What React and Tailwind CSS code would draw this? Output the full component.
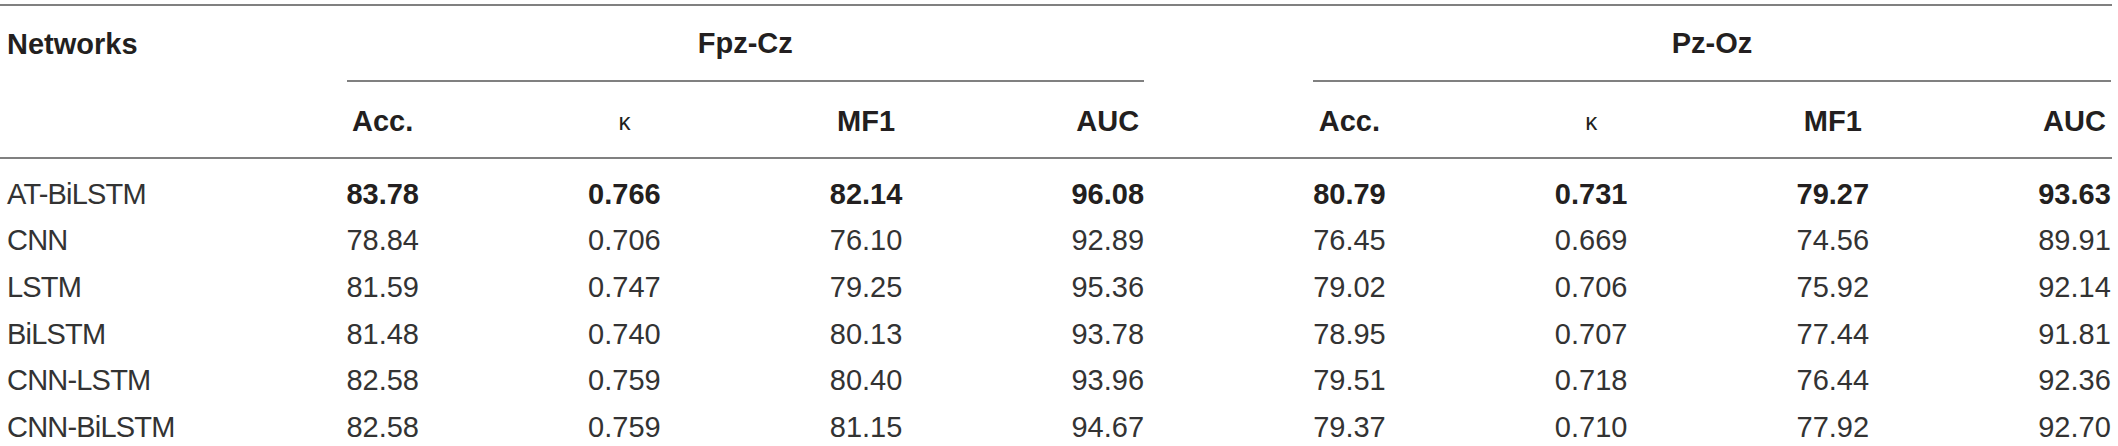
import React from "react";

const grid = "grid grid-cols-[177px_repeat(8,72px)] gap-x-[169.7px]";

const metrics = ["Acc.", "κ", "MF1", "AUC"];

const rows = [
  { name: "AT-BiLSTM", best: true, vals: ["83.78", "0.766", "82.14", "96.08", "80.79", "0.731", "79.27", "93.63"] },
  { name: "CNN", vals: ["78.84", "0.706", "76.10", "92.89", "76.45", "0.669", "74.56", "89.91"] },
  { name: "LSTM", vals: ["81.59", "0.747", "79.25", "95.36", "79.02", "0.706", "75.92", "92.14"] },
  { name: "BiLSTM", vals: ["81.48", "0.740", "80.13", "93.78", "78.95", "0.707", "77.44", "91.81"] },
  { name: "CNN-LSTM", vals: ["82.58", "0.759", "80.40", "93.96", "79.51", "0.718", "76.44", "92.36"] },
  { name: "CNN-BiLSTM", vals: ["82.58", "0.759", "81.15", "94.67", "79.37", "0.710", "77.92", "92.70"] },
];

function Cell({ children, className = "" }) {
  return <div className={`flex items-center justify-center whitespace-nowrap ${className}`}>{children}</div>;
}

export default function App() {
  return (
    <div className="w-[2118px] h-[446px] overflow-hidden bg-white font-['Liberation_Sans',Arial,sans-serif] text-[29px] leading-none text-[#231f20]">
      <div className="w-[2112px] pt-[4px]">
        <div className="h-[2px] bg-[#808080]" />

        {/* group header */}
        <div className={`${grid} h-[76px]`}>
          <div className="flex items-center pl-[7px] font-bold">Networks</div>
          <Cell className="col-span-4 font-bold border-b-2 border-[#808080]">Fpz-Cz</Cell>
          <Cell className="col-span-4 font-bold border-b-2 border-[#808080]">Pz-Oz</Cell>
        </div>

        {/* metric header */}
        <div className={`${grid} h-[75px] pt-[4px]`}>
          <div />
          {[...metrics, ...metrics].map((m, i) => (
            <Cell key={i} className={m === "κ" ? "font-normal text-[24px]" : "font-bold"}>
              {m}
            </Cell>
          ))}
        </div>
        <div className="h-[2px] bg-[#808080]" />

        {/* body */}
        <div className="pt-[12px]">
          {rows.map((r) => (
            <div key={r.name} className={`${grid} h-[46.6px]`}>
              <div className="flex items-center pl-[7px] tracking-[-0.8px] text-[#333]">{r.name}</div>
              {r.vals.map((v, i) => (
                <Cell key={i} className={r.best ? "font-bold" : "text-[#333]"}>
                  {v}
                </Cell>
              ))}
            </div>
          ))}
        </div>
      </div>
    </div>
  );
}
